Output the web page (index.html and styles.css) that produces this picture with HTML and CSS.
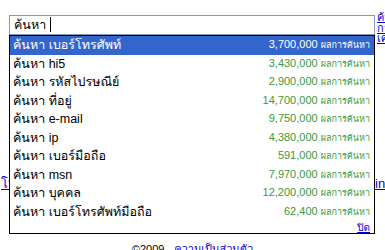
FILE: index.html
```html
<!DOCTYPE html>
<html lang="th">
<head>
    <meta charset="UTF-8">
    <title>Google Suggest</title>
    <link rel="stylesheet" href="styles.css">
</head>
<body>
    <div class="page">
        <div class="search-row">
            <div class="query">ค้นหา <span class="caret"></span></div>
            <div class="side-links">
                <a href="#">ค้นหาขั้นสูง</a>
                <a href="#">การตั้งค่า</a>
                <a href="#">เครื่องมือภาษา</a>
            </div>
        </div>

        <div class="links-row">
            <a href="#">โปรแกรมโฆษณา</a>
            <a href="#">in English</a>
        </div>

        <p class="footer">&copy;2009 - <a href="#">ความเป็นส่วนตัว</a></p>

        <div class="suggest">
            <div class="item selected"><span class="term">ค้นหา เบอร์โทรศัพท์</span><span class="count">3,700,000 <small>ผลการค้นหา</small></span></div>
            <div class="item"><span class="term">ค้นหา hi5</span><span class="count">3,430,000 <small>ผลการค้นหา</small></span></div>
            <div class="item"><span class="term">ค้นหา รหัสไปรษณีย์</span><span class="count">2,900,000 <small>ผลการค้นหา</small></span></div>
            <div class="item"><span class="term">ค้นหา ที่อยู่</span><span class="count">14,700,000 <small>ผลการค้นหา</small></span></div>
            <div class="item"><span class="term">ค้นหา e-mail</span><span class="count">9,750,000 <small>ผลการค้นหา</small></span></div>
            <div class="item"><span class="term">ค้นหา ip</span><span class="count">4,380,000 <small>ผลการค้นหา</small></span></div>
            <div class="item"><span class="term">ค้นหา เบอร์มือถือ</span><span class="count">591,000 <small>ผลการค้นหา</small></span></div>
            <div class="item"><span class="term">ค้นหา msn</span><span class="count">7,970,000 <small>ผลการค้นหา</small></span></div>
            <div class="item"><span class="term">ค้นหา บุคคล</span><span class="count">12,200,000 <small>ผลการค้นหา</small></span></div>
            <div class="item"><span class="term">ค้นหา เบอร์โทรศัพท์มือถือ</span><span class="count">62,400 <small>ผลการค้นหา</small></span></div>
            <div class="close"><a href="#">ปิด</a></div>
        </div>
    </div>
</body>
</html>
```

FILE: styles.css
```css
body {
    margin: 0;
    font-family: "Liberation Sans", Arial, "Loma", "Garuda", "Noto Sans Thai", sans-serif;
    background: #fff;
    overflow: hidden;
}
a {
    color: #0000cc;
}
.page {
    position: relative;
    width: 385px;
    height: 250px;
    padding-top: 15px;
    box-sizing: border-box;
    overflow: hidden;
}
.search-row {
    display: flex;
    align-items: flex-start;
    gap: 2px;
    padding-left: 9px;
}
.query {
    flex-shrink: 0;
    width: 366px;
    height: 20px;
    border: 1px solid #7f9db9;
    padding: 0 4px;
    box-sizing: border-box;
    font-size: 12.5px;
    line-height: 19px;
    white-space: nowrap;
}
.caret {
    display: inline-block;
    width: 1px;
    height: 15px;
    background: #000;
    vertical-align: -3px;
}
.side-links {
    display: flex;
    flex-direction: column;
    margin-top: -3px;
    font-size: 11px;
    line-height: 10.5px;
    white-space: nowrap;
}
.links-row {
    display: grid;
    grid-template-columns: 374px auto;
    margin-top: 131px;
    padding-left: 1px;
    font-size: 13px;
    line-height: 18px;
    white-space: nowrap;
}
.footer {
    margin: 49px 0 0;
    text-align: center;
    font-size: 11px;
    line-height: 14px;
}
.suggest {
    position: absolute;
    top: 35px;
    left: 9px;
    width: 366px;
    box-sizing: border-box;
    border: 1px solid #000;
    background: #fff;
}
.item {
    display: flex;
    justify-content: space-between;
    align-items: center;
    height: 18.5px;
    padding: 0 4px 0 3px;
    font-size: 12.5px;
    white-space: nowrap;
}
.item.selected {
    background: #3366cc;
    color: #fff;
}
.count {
    font-size: 11px;
    color: #3a9a3a;
}
.count small {
    font-size: 9px;
}
.selected .count {
    color: #fff;
}
.close {
    text-align: right;
    padding: 1px 4px 0;
    font-size: 10px;
    line-height: 11px;
}
```
